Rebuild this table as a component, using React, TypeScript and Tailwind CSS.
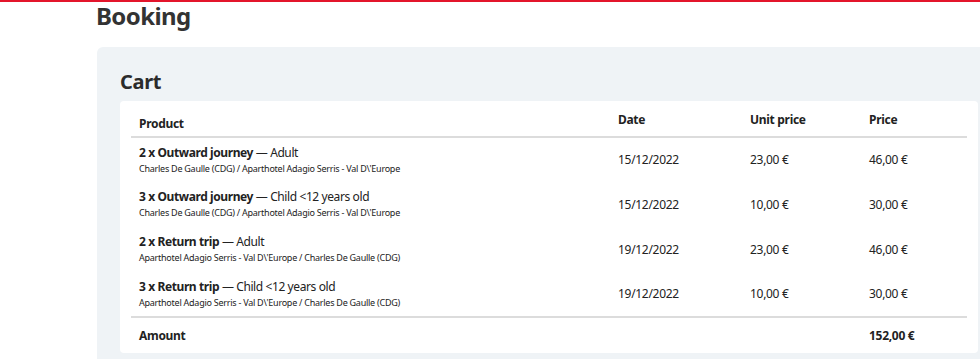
import React from "react";

type CartLine = {
  qty: number;
  trip: string;
  passenger: string;
  route: string;
  date: string;
  unit: string;
  price: string;
};

const LINES: CartLine[] = [
  {
    qty: 2,
    trip: "Outward journey",
    passenger: "Adult",
    route: "Charles De Gaulle (CDG) / Aparthotel Adagio Serris - Val D\\'Europe",
    date: "15/12/2022",
    unit: "23,00 €",
    price: "46,00 €",
  },
  {
    qty: 3,
    trip: "Outward journey",
    passenger: "Child <12 years old",
    route: "Charles De Gaulle (CDG) / Aparthotel Adagio Serris - Val D\\'Europe",
    date: "15/12/2022",
    unit: "10,00 €",
    price: "30,00 €",
  },
  {
    qty: 2,
    trip: "Return trip",
    passenger: "Adult",
    route: "Aparthotel Adagio Serris - Val D\\'Europe / Charles De Gaulle (CDG)",
    date: "19/12/2022",
    unit: "23,00 €",
    price: "46,00 €",
  },
  {
    qty: 3,
    trip: "Return trip",
    passenger: "Child <12 years old",
    route: "Aparthotel Adagio Serris - Val D\\'Europe / Charles De Gaulle (CDG)",
    date: "19/12/2022",
    unit: "10,00 €",
    price: "30,00 €",
  },
];

export default function App() {
  return (
    <div className="w-[980px] h-[359px] overflow-hidden bg-white border-t-2 border-[#e3152b] text-[#222] font-['Noto_Sans',sans-serif]">
      <h1 className="pl-[96px] text-[24px] leading-[27px] font-bold tracking-[-0.6px] text-[#333]">Booking</h1>

      {/* cart panel */}
      <div className="ml-[97px] mt-[18px] h-[320px] rounded-l-md bg-[#eff3f6] pl-[23px] pt-[22px]">
        <h2 className="text-[20px] leading-[26px] font-bold tracking-[-0.3px] text-[#2b2b2b] mb-[6px]">Cart</h2>

        <div className="w-[858px] rounded bg-white px-[11px] pt-[6px]">
          <table className="w-full border-collapse text-[12px] tracking-[-0.3px]">
            <thead>
              <tr className="border-b-2 border-[#dcdcdc]">
                <th className="w-[479px] px-2 pt-[8px] pb-[3px] text-left font-bold align-bottom">Product</th>
                <th className="w-[132px] px-2 pb-[7px] text-left font-bold align-bottom">Date</th>
                <th className="w-[119px] px-2 pb-[7px] text-left font-bold align-bottom">Unit price</th>
                <th className="px-2 pb-[7px] text-left font-bold align-bottom">Price</th>
              </tr>
            </thead>
            <tbody>
              {LINES.map((l, i) => (
                <tr key={i} className={i === LINES.length - 1 ? "border-b-2 border-[#dcdcdc]" : ""}>
                  <td className="h-[45px] px-2 align-middle">
                    <div className="text-[12px] leading-[16px] tracking-[-0.4px]">
                      <span className="font-bold">
                        {l.qty} x {l.trip}
                      </span>{" "}
                      — {l.passenger}
                    </div>
                    <div className="text-[9px] leading-[14px] mt-[1px] tracking-[-0.25px]">{l.route}</div>
                  </td>
                  <td className="px-2 align-middle">{l.date}</td>
                  <td className="px-2 align-middle">{l.unit}</td>
                  <td className="px-2 align-middle">{l.price}</td>
                </tr>
              ))}
            </tbody>
            <tfoot>
              <tr>
                <td className="h-[36px] px-2 font-bold align-middle">Amount</td>
                <td />
                <td />
                <td className="px-2 font-bold align-middle">152,00 €</td>
              </tr>
            </tfoot>
          </table>
        </div>
      </div>
    </div>
  );
}
